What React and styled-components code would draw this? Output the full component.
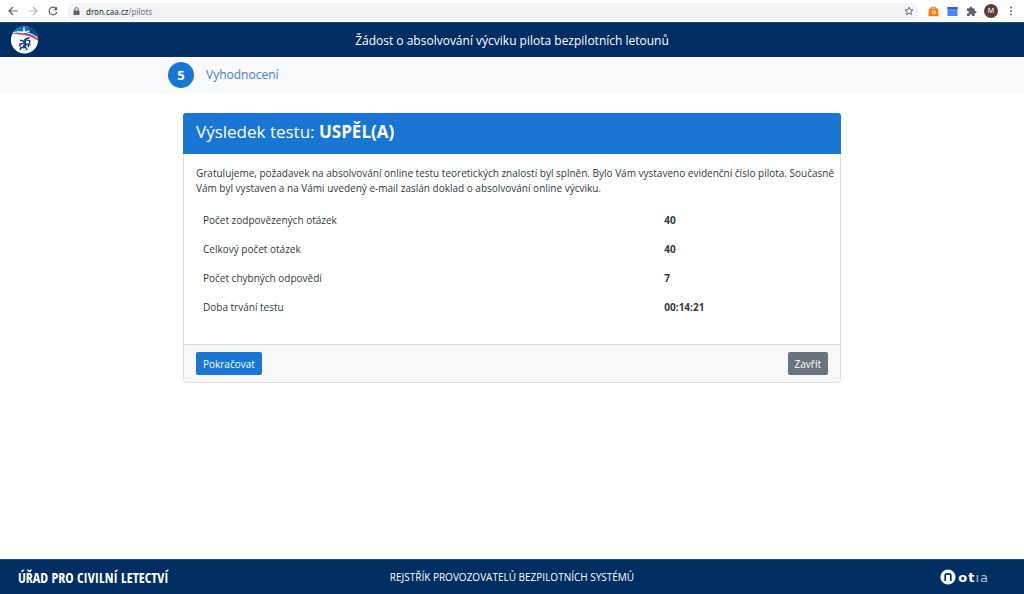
import React from "react";
import styled, { createGlobalStyle } from "styled-components";

const GlobalStyle = createGlobalStyle`
  * {
    box-sizing: border-box;
  }

  body {
    margin: 0;
    background: #ffffff;
    color: #33383d;
    font-family: "Open Sans", "Noto Sans", sans-serif;
    font-size: 10px;
    line-height: 15px;
  }
`;

const Page = styled.div`
  min-height: 100vh;
  display: flex;
  flex-direction: column;
`;

const BrowserBar = styled.div`
  height: 22px;
  padding: 0 7px;
  display: flex;
  align-items: center;
  gap: 8px;
  background: #ffffff;
`;

const IconButton = styled.button`
  width: 12px;
  height: 12px;
  padding: 0;
  border: 0;
  display: flex;
  align-items: center;
  justify-content: center;
  background: none;
  color: ${(props) => (props.$muted ? "#b4b7ba" : "#5f6368")};
`;

const AddressBar = styled.div`
  flex: 1;
  height: 17px;
  padding: 0 4px 0 6px;
  border-radius: 9px;
  display: flex;
  align-items: center;
  gap: 6px;
  background: #f1f3f4;
`;

const Url = styled.a`
  flex: 1;
  color: #77797c;
  font-family: "Noto Sans", sans-serif;
  font-size: 8px;
  text-decoration: none;
`;

const Host = styled.span`
  color: #26282b;
`;

const Extensions = styled.div`
  display: flex;
  align-items: center;
  gap: 7px;
`;

const Avatar = styled.button`
  width: 14px;
  height: 14px;
  padding: 0;
  border: 0;
  border-radius: 50%;
  background: #5d4037;
  color: #ffffff;
  font-family: "Noto Sans", sans-serif;
  font-size: 7px;
  line-height: 14px;
`;

const Header = styled.header`
  height: 35px;
  padding: 0 9px;
  display: grid;
  grid-template-columns: 1fr auto 1fr;
  align-items: center;
  background: #002d62;
  border-top: 1px solid #24486f;
  color: #ffffff;
`;

const HomeLink = styled.a`
  display: flex;
  justify-self: start;
`;

const AppTitle = styled.h1`
  margin: 0;
  font-size: 12px;
  font-weight: 400;
`;

const StepBar = styled.nav`
  height: 36px;
  background: #f8f9fa;
`;

const Container = styled.div`
  width: 100%;
  max-width: 688px;
  height: 100%;
  margin: 0 auto;
  padding: ${(props) => (props.$gutter ? "0 15px" : "0")};
`;

const Step = styled.div`
  height: 35px;
  display: flex;
  align-items: center;
  gap: 12px;
  color: #3f7fcb;
  font-size: 12px;
`;

const StepNumber = styled.span`
  width: 26px;
  height: 26px;
  border-radius: 50%;
  background: #1976d2;
  color: #ffffff;
  font-size: 13px;
  font-weight: 700;
  line-height: 26px;
  text-align: center;
`;

const Main = styled.main`
  flex: 1;
  padding: 20px 0;
`;

const Card = styled.section`
  border-radius: 3px;
  overflow: hidden;
`;

const CardTitle = styled.h2`
  margin: 0;
  padding: 7px 13px 10px;
  background: #1976d2;
  color: #ffffff;
  font-size: 17px;
  font-weight: 400;
  line-height: 24px;
`;

const CardBody = styled.div`
  padding: 12px 12px 22px;
  border: 1px solid #dfdfdf;
  border-width: 0 1px;
`;

const Message = styled.p`
  margin: 0 -11px 10px 0;
`;

const Results = styled.table`
  width: 100%;
  border-collapse: collapse;
  table-layout: fixed;
`;

const Label = styled.th`
  width: 73%;
  padding: 7px;
  font-weight: 400;
  text-align: left;
`;

const Value = styled.td`
  padding: 7px;
  font-weight: 700;
`;

const CardFooter = styled.div`
  padding: 7px 12px;
  display: flex;
  justify-content: space-between;
  background: #f7f7f7;
  border: 1px solid #dfdfdf;
  border-radius: 0 0 3px 3px;
`;

const Button = styled.button`
  height: 23px;
  padding: 0 7px;
  border: 0;
  border-radius: 2px;
  background: ${(props) => (props.$secondary ? "#6c757d" : "#1976d2")};
  color: #ffffff;
  font-family: inherit;
  font-size: 10px;
`;

const Footer = styled.footer`
  height: 35px;
  padding: 0 18px;
  display: grid;
  grid-template-columns: 1fr auto 1fr;
  align-items: center;
  background: #002d62;
  border-top: 1px solid #24486f;
  color: #ffffff;
`;

const Authority = styled.span`
  font-family: "Open Sans Condensed", "Liberation Sans Narrow", sans-serif;
  font-size: 14px;
  font-weight: 700;
`;

const Vendor = styled.a`
  justify-self: end;
  margin-right: 18px;
  display: flex;
  align-items: center;
  gap: 2px;
  color: #ffffff;
  font-family: "DejaVu Sans", sans-serif;
  font-size: 13px;
  font-weight: 700;
  text-decoration: none;
`;

const VendorName = styled.span`
  display: flex;
  gap: 1px;
`;

const VendorTail = styled.span`
  color: #b3c0d0;
  font-weight: 400;
`;

const BackIcon = () => (
  <svg width="10" height="10" viewBox="0 0 10 10" fill="none" stroke="currentColor" strokeWidth="1.2">
    <path d="M9.5 5H1M5 1L1 5l4 4" />
  </svg>
);

const ForwardIcon = () => (
  <svg width="10" height="10" viewBox="0 0 10 10" fill="none" stroke="currentColor" strokeWidth="1.2">
    <path d="M.5 5H9M5 1l4 4-4 4" />
  </svg>
);

const ReloadIcon = () => (
  <svg width="10" height="10" viewBox="0 0 10 10" fill="none">
    <path d="M8.3 2.8A3.9 3.9 0 1 0 8.8 6" stroke="currentColor" strokeWidth="1.2" />
    <path d="M9.2.4v3.9H5.3z" fill="currentColor" />
  </svg>
);

const LockIcon = () => (
  <svg width="7" height="9" viewBox="0 0 7 9" fill="none">
    <path d="M1.8 4V2.3a1.7 1.7 0 0 1 3.4 0V4" stroke="#5f6368" />
    <rect x=".5" y="3.4" width="6" height="4.6" rx=".6" fill="#5f6368" />
  </svg>
);

const StarIcon = () => (
  <svg width="10" height="10" viewBox="0 0 24 24" fill="none" stroke="currentColor" strokeWidth="2.2">
    <path d="M12 2.5l2.8 6.3 6.8.6-5.2 4.5 1.6 6.8-6-3.6-6 3.6 1.6-6.8L2.4 9.4l6.8-.6z" />
  </svg>
);

const BagIcon = () => (
  <svg width="11" height="11" viewBox="0 0 11 11" fill="none">
    <path d="M3.5 3V1.2h4V3" stroke="#f57c00" />
    <path d="M1 2.5h9l.6 7.8H.4z" fill="#ff7a00" />
    <circle cx="5.4" cy="6.3" r="1.5" stroke="#fff" />
    <path d="M7 4.5V8" stroke="#fff" strokeWidth=".8" />
  </svg>
);

const WindowIcon = () => (
  <svg width="11" height="11" viewBox="0 0 11 11">
    <path fill="#4d85ee" d="M.5 1h10v9H.5z" />
    <path fill="#2c5fc9" d="M.5 1h10v2.4H.5z" />
    <path fill="#6294f2" d="M.5 3.4h10v1H.5z" />
  </svg>
);

const PuzzleIcon = () => (
  <svg width="11" height="11" viewBox="0 0 24 24" fill="currentColor">
    <path d="M20.5 11H19V7a2 2 0 0 0-2-2h-4V3.5a2.5 2.5 0 0 0-5 0V5H4a2 2 0 0 0-2 2v3.8h1.5a2.7 2.7 0 0 1 0 5.4H2V20a2 2 0 0 0 2 2h3.8v-1.5a2.7 2.7 0 0 1 5.4 0V22H17a2 2 0 0 0 2-2v-4h1.5a2.5 2.5 0 0 0 0-5z" />
  </svg>
);

const MenuIcon = () => (
  <svg width="4" height="10" viewBox="0 0 4 10" fill="currentColor">
    <circle cx="2" cy="1.4" r="1" />
    <circle cx="2" cy="5" r="1" />
    <circle cx="2" cy="8.6" r="1" />
  </svg>
);

const Emblem = () => (
  <svg width="31" height="30" viewBox="0 0 31 30">
    <defs>
      <clipPath id="disc">
        <circle cx="15.5" cy="15" r="13.6" />
      </clipPath>
    </defs>
    <circle cx="15.5" cy="15" r="13.6" fill="#ffffff" />
    <g clipPath="url(#disc)">
      <path fill="#0875c1" d="M0 0h31v15C24 10 16 8 0 9z" />
      <path fill="#08488a" d="M19 0h12v13c-4-3-7-4-10-5z" />
    </g>
    <path fill="none" stroke="#ffffff" strokeWidth="1" d="M4 7.5c9-1.4 18 0 24 5" />
    <path fill="none" stroke="#de3a49" strokeWidth="1.5" d="M8 8.6c7 0 14 1.6 21 6.2" />
    <path fill="#ffffff" d="M14.4 2.2h1l.5 4.2 5-.9v.7L16 8l-2.4.2-5.2-1v-.6l5.8.1z" />
    <path fill="none" stroke="#12375f" d="M21 1.8c4 1 6 3 7.5 6" />
    <g fill="none" stroke="#174879" strokeLinecap="round">
      <path strokeWidth="2.6" d="M17 14.2l-1.6 2.2 1 3-1.6 2.6" />
      <path strokeWidth="1.5" d="M15 16.5l-3.6-1.3M14.8 18.6l-4.2.5M16 21.5l2 3.1M14.4 22.4l-2.8.6-.4 1.6M16.8 19.6l2.6-.3v2.5" />
      <path strokeWidth="1.4" d="M18.4 13.2l1.8-.4M18.4 15.2l2.4.4-.4 2.4.6 2M11.6 21l-1-.2" />
    </g>
  </svg>
);

const VendorMark = () => (
  <svg width="16" height="16" viewBox="0 0 16 16" fill="none">
    <circle cx="8" cy="8" r="7.6" fill="#ffffff" />
    <path stroke="#002d62" strokeWidth="1.7" d="M5.2 12V6.5Q5.2 4.8 7 4.8h2q1.8 0 1.8 1.7V12" />
  </svg>
);

const results = [
  { label: "Počet zodpovězených otázek", value: "40" },
  { label: "Celkový počet otázek", value: "40" },
  { label: "Počet chybných odpovědí", value: "7" },
  { label: "Doba trvání testu", value: "00:14:21" },
];

const App = () => (
  <>
    <GlobalStyle />
    <Page>
      <BrowserBar>
        <IconButton aria-label="Zpět">
          <BackIcon />
        </IconButton>
        <IconButton aria-label="Vpřed" $muted>
          <ForwardIcon />
        </IconButton>
        <IconButton aria-label="Obnovit">
          <ReloadIcon />
        </IconButton>
        <AddressBar>
          <LockIcon />
          <Url href="#pilots">
            <Host>dron.caa.cz</Host>/pilots
          </Url>
          <IconButton aria-label="Přidat záložku">
            <StarIcon />
          </IconButton>
        </AddressBar>
        <Extensions>
          <IconButton aria-label="Nákupy">
            <BagIcon />
          </IconButton>
          <IconButton aria-label="Okno">
            <WindowIcon />
          </IconButton>
          <IconButton aria-label="Rozšíření">
            <PuzzleIcon />
          </IconButton>
          <Avatar aria-label="Profil">M</Avatar>
          <IconButton aria-label="Nabídka">
            <MenuIcon />
          </IconButton>
        </Extensions>
      </BrowserBar>
      <Header>
        <HomeLink href="#home" aria-label="Úřad pro civilní letectví">
          <Emblem />
        </HomeLink>
        <AppTitle>Žádost o absolvování výcviku pilota bezpilotních letounů</AppTitle>
      </Header>
      <StepBar>
        <Container>
          <Step>
            <StepNumber>5</StepNumber>
            Vyhodnocení
          </Step>
        </Container>
      </StepBar>
      <Main>
        <Container $gutter>
          <Card>
            <CardTitle>
              Výsledek testu: <strong>USPĚL(A)</strong>
            </CardTitle>
            <CardBody>
              <Message>
                Gratulujeme, požadavek na absolvování online testu teoretických
                znalostí byl splněn. Bylo Vám vystaveno evidenční číslo pilota.
                Současně Vám byl vystaven a na Vámi uvedený e-mail zaslán doklad
                o absolvování online výcviku.
              </Message>
              <Results>
                <tbody>
                  {results.map((result) => (
                    <tr key={result.label}>
                      <Label scope="row">{result.label}</Label>
                      <Value>{result.value}</Value>
                    </tr>
                  ))}
                </tbody>
              </Results>
            </CardBody>
            <CardFooter>
              <Button>Pokračovat</Button>
              <Button $secondary>Zavřít</Button>
            </CardFooter>
          </Card>
        </Container>
      </Main>
      <Footer>
        <Authority>ÚŘAD PRO CIVILNÍ LETECTVÍ</Authority>
        <span>REJSTŘÍK PROVOZOVATELŮ BEZPILOTNÍCH SYSTÉMŮ</span>
        <Vendor href="#notia" aria-label="notia">
          <VendorMark />
          <VendorName>
            <span>o</span>
            <span>t</span>
            <VendorTail>ı</VendorTail>
            <VendorTail>a</VendorTail>
          </VendorName>
        </Vendor>
      </Footer>
    </Page>
  </>
);

export default App;
